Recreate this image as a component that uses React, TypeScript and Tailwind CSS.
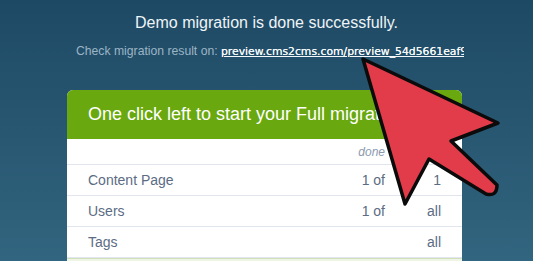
const rows = [
  { name: "Content Page", done: "1 of", total: "1" },
  { name: "Users", done: "1 of", total: "all" },
  { name: "Tags", done: "", total: "all" },
];

function CursorArrow() {
  return (
    <svg
      className="absolute left-0 top-0"
      width="533"
      height="261"
      viewBox="0 0 533 261"
    >
      <path
        d="M363 59 L405 204 L429 159 L486 194 Q497 197 497 185 L451 141 L498 123 Z"
        fill="#e23b49"
        stroke="#0b0b0b"
        strokeWidth="3.5"
        strokeLinejoin="round"
      />
    </svg>
  );
}

export default function App() {
  return (
    <div className="relative w-[533px] h-[261px] overflow-hidden bg-gradient-to-b from-[#1e4964] to-[#32657f] font-['Liberation_Sans',Arial,sans-serif]">
      <div className="flex flex-col items-center pt-[13px]">
        {/* Title */}
        <h1 className="text-[16px] leading-[20px] text-[#eef4f7]">
          Demo migration is done successfully.
        </h1>

        {/* Result link */}
        <div className="mt-[10px] ml-[7px] flex items-baseline leading-[16px] whitespace-nowrap">
          <span className="text-[12.2px] text-[#9cb5c6]">Check migration result on:&nbsp;</span>
          <span className="w-[243px] overflow-hidden font-['DejaVu_Sans',sans-serif] text-[10.8px] text-[#f4f8fa] underline [text-shadow:0_0_0.4px_#fff]">
            preview.cms2cms.com/preview_54d5661eaf9c
          </span>
        </div>

        {/* Card */}
        <div className="mt-[30px] ml-[-4px] w-[395px] rounded-t-[6px] overflow-hidden bg-white">
          <div className="h-[49px] bg-[#69a90f] flex items-center px-[21px]">
            <span className="text-[18px] text-white whitespace-nowrap">
              One click left to start your Full migration!
            </span>
          </div>
          <div className="h-[26px] flex items-center justify-end pr-[77px] border-b border-[#e1e6ee]">
            <span className="text-[12px] italic text-[#8d9bb0]">done</span>
          </div>
          {rows.map((r) => (
            <div
              key={r.name}
              className="h-[31px] flex items-center px-[21px] border-b border-[#e1e6ee] text-[14px] text-[#5b6c84]"
            >
              <span className="flex-1">{r.name}</span>
              <span className="w-[60px] text-right">{r.done}</span>
              <span className="w-[56px] text-right">{r.total}</span>
            </div>
          ))}
          <div className="h-[10px] bg-[#eef5e4] border-t border-[#cfe0bb]" />
        </div>
      </div>
      <CursorArrow />
    </div>
  );
}
